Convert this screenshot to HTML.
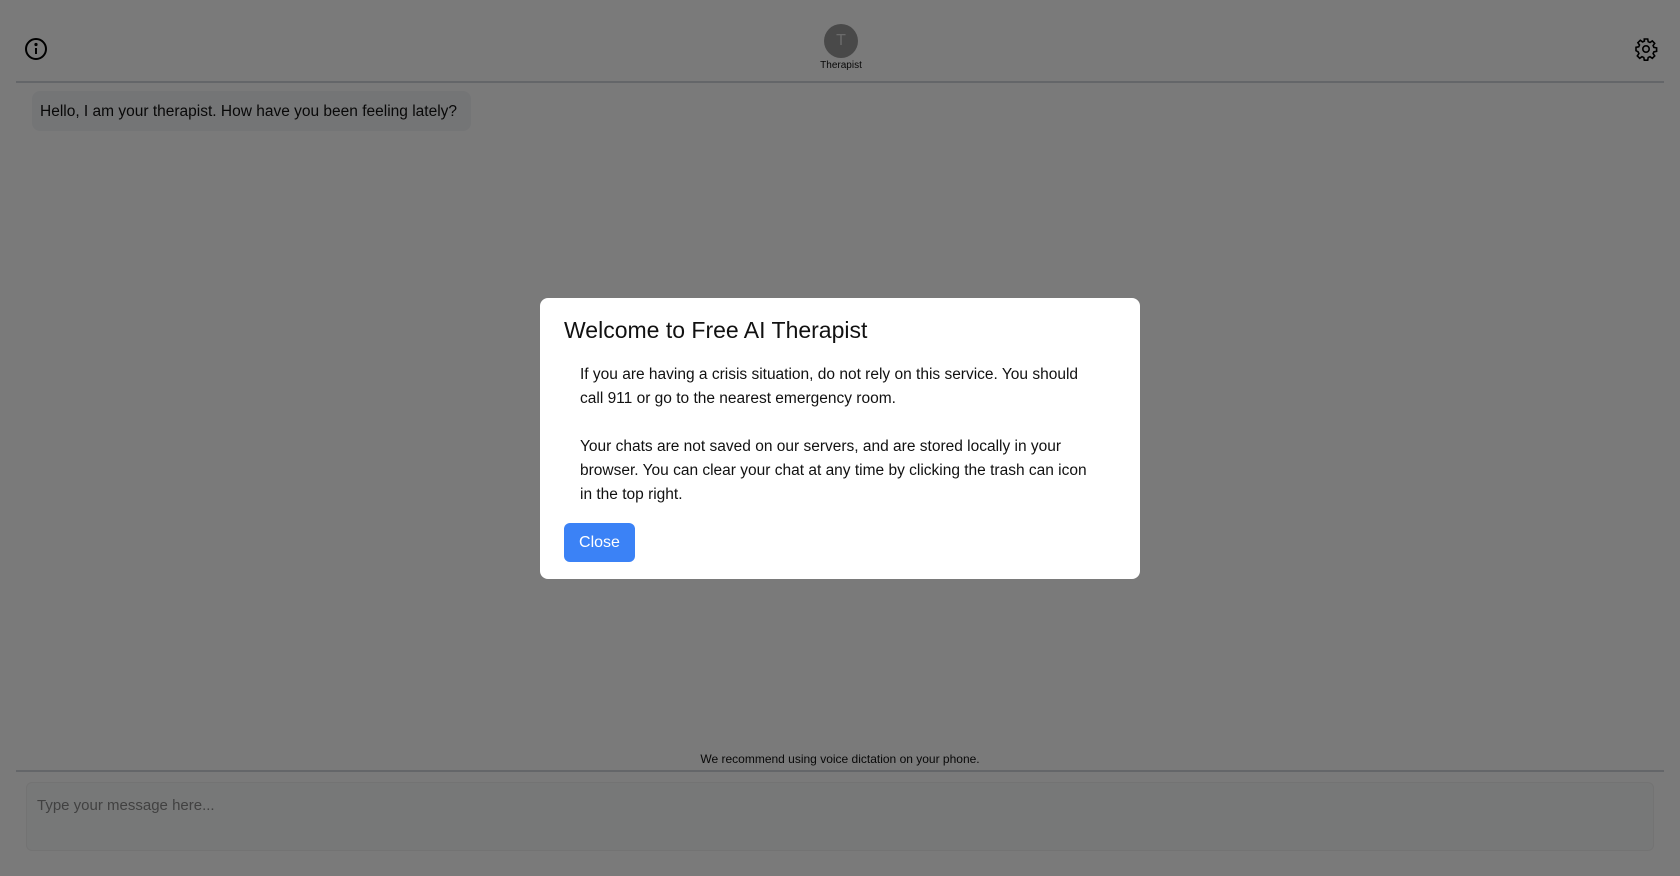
<!DOCTYPE html>
<html><head><meta charset="utf-8"><style>
*{box-sizing:border-box;margin:0;padding:0}
body{width:1680px;height:876px;background:#fff;font-family:"Liberation Sans",sans-serif;position:relative;overflow:hidden;color:#111}
.abs{position:absolute}
.hline{position:absolute;left:16px;width:1648px;height:2px;background:#d1d5db}
.overlay{position:absolute;inset:0;background:rgba(0,0,0,0.52)}
.modal{position:absolute;left:540px;top:298px;width:600px;height:281px;background:#fff;border-radius:8px}
.modal h2{position:absolute;left:24px;top:19px;font-size:23px;font-weight:normal;color:#111}
.modal .p{position:absolute;left:40px;width:515px;font-size:15.5px;line-height:24px;color:#111}
.btn{position:absolute;left:24px;top:225px;width:71px;height:39px;background:#3b82f6;border-radius:6px;color:#fff;font-size:16px;line-height:39px;text-align:center}
</style></head><body>
<svg class="abs" style="left:24px;top:37px" width="24" height="24" viewBox="0 0 24 24" fill="none" stroke="#000" stroke-width="2"><circle cx="12" cy="12" r="10"/><line x1="12" y1="11" x2="12" y2="17"/><circle cx="12" cy="7.5" r="0.6" fill="#000"/></svg>
<div class="abs" style="left:824px;top:24px;width:34px;height:34px;border-radius:50%;background:#999;color:#ddd;font-size:16px;text-align:center;line-height:34px">T</div>
<div class="abs" style="left:801px;top:60px;width:80px;text-align:center;font-size:10px">Therapist</div>
<svg class="abs" style="left:1634px;top:37px" width="24" height="24" viewBox="0 0 24 24" fill="none" stroke="#000" stroke-width="1.6"><path d="M10.3 2h3.4l.5 2.7 1.8.8 2.3-1.6 2.4 2.4-1.6 2.3.8 1.8 2.7.5v3.4l-2.7.5-.8 1.8 1.6 2.3-2.4 2.4-2.3-1.6-1.8.8-.5 2.7h-3.4l-.5-2.7-1.8-.8-2.3 1.6-2.4-2.4 1.6-2.3-.8-1.8L2 13.7v-3.4l2.7-.5.8-1.8-1.6-2.3 2.4-2.4 2.3 1.6 1.8-.8z"/><circle cx="12" cy="12" r="3.2"/></svg>
<div class="hline" style="top:81px"></div>
<div class="abs" style="left:32px;top:91px;width:439px;height:40px;background:#f3f4f6;border-radius:8px;font-size:15.5px;line-height:42px;padding-left:8px">Hello, I am your therapist. How have you been feeling lately?</div>
<div class="abs" style="left:0;top:752px;width:1680px;text-align:center;font-size:12px">We recommend using voice dictation on your phone.</div>
<div class="hline" style="top:770px"></div>
<div class="abs" style="left:26px;top:782px;width:1628px;height:69px;background:#f9fafb;border:1px solid #f0f0f0;border-radius:6px;padding:14px 10px;font-size:15px;color:#888">Type your message here...</div>
<div class="overlay"></div>
<div class="modal">
<h2>Welcome to Free AI Therapist</h2>
<div class="p" style="top:65px">If you are having a crisis situation, do not rely on this service. You should call 911 or go to the nearest emergency room.</div>
<div class="p" style="top:137px">Your chats are not saved on our servers, and are stored locally in your browser. You can clear your chat at any time by clicking the trash can icon in the top right.</div>
<div class="btn">Close</div>
</div>
</body></html>
